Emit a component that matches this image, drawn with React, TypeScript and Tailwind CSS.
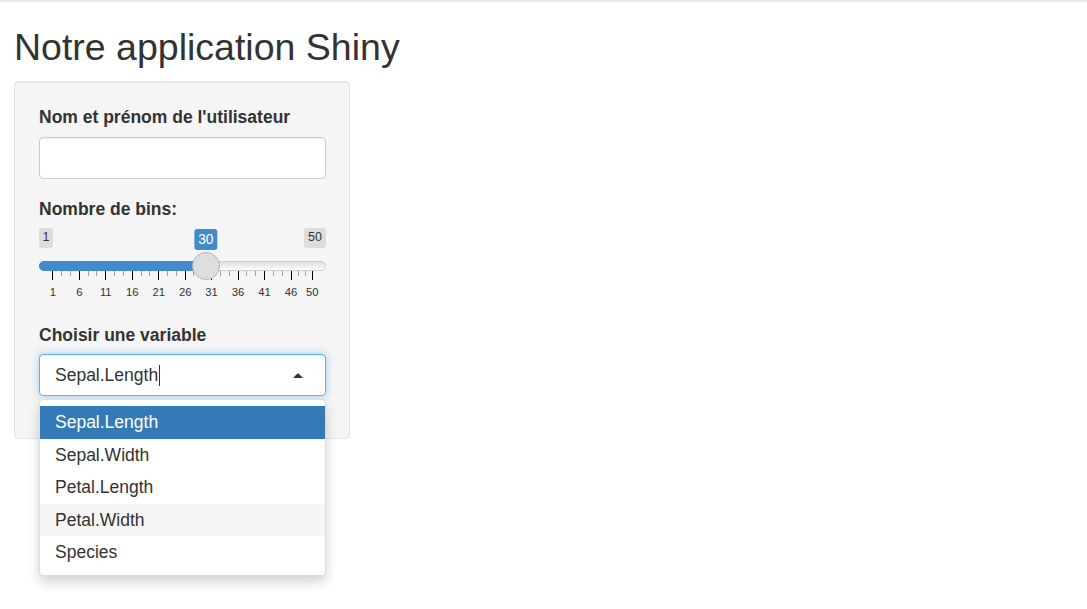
import React from "react";

const MIN = 1;
const MAX = 50;
const VAL = 30;
const GRID_L = 13.3;
const GRID_R = 272.7;
const xOf = (v: number) => GRID_L + ((v - MIN) * (GRID_R - GRID_L)) / (MAX - MIN);

const majors = [1, 6, 11, 16, 21, 26, 31, 36, 41, 46, 50];

function Slider() {
  const minors: number[] = [];
  for (let i = 1; i < majors.length; i++) {
    const a = xOf(majors[i - 1]);
    const b = xOf(majors[i]);
    minors.push(a + (b - a) / 3, a + (2 * (b - a)) / 3);
  }
  const hx = xOf(VAL);
  return (
    <div className="relative flex h-[83px] w-full flex-col pt-[6px]">
      <div className="relative flex items-start justify-between">
        <div className="h-[19.5px] rounded-[3px] bg-[#dddddd] px-[3.5px] text-[12.5px] leading-[19.5px] text-[#333]">
          1
        </div>
        <div
          className="absolute top-[1px] h-[21px] -translate-x-1/2 rounded-[3px] bg-[#428bca] px-[4px] text-[13.75px] leading-[21px] text-white"
          style={{ left: hx }}
        >
          30
        </div>
        <div className="h-[19.5px] rounded-[3px] bg-[#dddddd] px-[4px] text-[12.5px] leading-[19.5px] text-[#333]">
          50
        </div>
      </div>
      {/* track */}
      <div className="relative mt-[13.5px] h-[10px] w-full">
        <div className="h-full w-full rounded-full border border-[#cccccc] bg-gradient-to-b from-[#dedede] to-white" />
        <div
          className="absolute left-0 top-0 h-[10px] rounded-l-full bg-[#428bca]"
          style={{ width: hx }}
        />
        <div
          className="absolute top-[-9.5px] z-[1] h-[28px] w-[28px] -translate-x-1/2 rounded-full border border-[#b5b5b5] bg-[#dedede]"
          style={{ left: hx }}
        />
      </div>
      {/* grid */}
      <div className="relative h-[34px] w-full">
        {minors.map((x, i) => (
          <div
            key={"m" + i}
            className="absolute top-0 h-[5px] w-px bg-[#a0a0a0]"
            style={{ left: x }}
          />
        ))}
        {majors.map((v) => (
          <div
            key={"M" + v}
            className="absolute top-0 h-[9px] w-px bg-black"
            style={{ left: xOf(v) }}
          />
        ))}
        {majors.map((v) => (
          <div
            key={"L" + v}
            className="absolute top-[14px] -translate-x-1/2 text-[11.25px] leading-[14px] text-[#333]"
            style={{ left: xOf(v) + 0.5 }}
          >
            {v}
          </div>
        ))}
      </div>
    </div>
  );
}

const options = ["Sepal.Length", "Sepal.Width", "Petal.Length", "Petal.Width", "Species"];

export default function App() {
  return (
    <div
      className="min-h-[609px] w-full bg-white text-[#333]"
      style={{ fontFamily: '"Liberation Sans", Arial, sans-serif' }}
    >
      <div className="h-[2px] w-full bg-[#e6e6eb]" />
      <h2 className="mb-[13px] ml-[14px] mt-[25px] text-[37.5px] font-normal leading-[41px] text-[#333]">
        Notre application Shiny
      </h2>
      <div className="ml-[14px] w-[336px] rounded-[4px] border border-[#e3e3e3] bg-[#f5f5f5] pb-[42px] pl-[24px] pr-[23px] pt-[23px] shadow-[inset_0_1px_1px_rgba(0,0,0,0.05)]">
        <div className="h-[25px] text-[17.5px] font-bold leading-[25px]">
          Nom et prénom de l'utilisateur
        </div>
        <div className="mt-[7px] h-[42px] w-full rounded-[4px] border border-[#cccccc] bg-white shadow-[inset_0_1px_1px_rgba(0,0,0,0.075)]" />
        <div className="mt-[18px] h-[25px] text-[17.5px] font-bold leading-[25px]">
          Nombre de bins:
        </div>
        <Slider />
        <div className="mt-[18px] h-[25px] text-[17.5px] font-bold leading-[25px]">
          Choisir une variable
        </div>
        <div className="relative mt-[6px]">
          <div className="flex h-[42px] w-full items-center justify-between rounded-[4px] border border-[#66afe9] bg-white pl-[15px] pr-[22px] shadow-[inset_0_1px_1px_rgba(0,0,0,0.075),0_0_8px_rgba(102,175,233,0.6)]">
            <div className="flex items-center text-[17.5px] leading-[25px] text-[#333]">
              <span>Sepal.Length</span>
              <span className="ml-[1px] inline-block h-[21px] w-px bg-[#333]" />
            </div>
            <div className="h-0 w-0 border-x-[5px] border-b-[5px] border-x-transparent border-b-[#333]" />
          </div>
          <div className="absolute left-0 right-0 top-[45px] z-10 flex flex-col rounded-[4px] border border-[#dcdcdc] bg-white py-[6px] shadow-[0_6px_12px_rgba(0,0,0,0.175)]">
            {options.map((o, i) => (
              <div
                key={o}
                className={
                  "h-[32.5px] pl-[15px] text-[17.5px] leading-[32.5px] " +
                  (i === 0
                    ? "bg-[#337ab7] text-white"
                    : i === 3
                    ? "bg-[#f5f5f5] text-[#333]"
                    : "text-[#333]")
                }
              >
                {o}
              </div>
            ))}
          </div>
        </div>
      </div>
    </div>
  );
}
